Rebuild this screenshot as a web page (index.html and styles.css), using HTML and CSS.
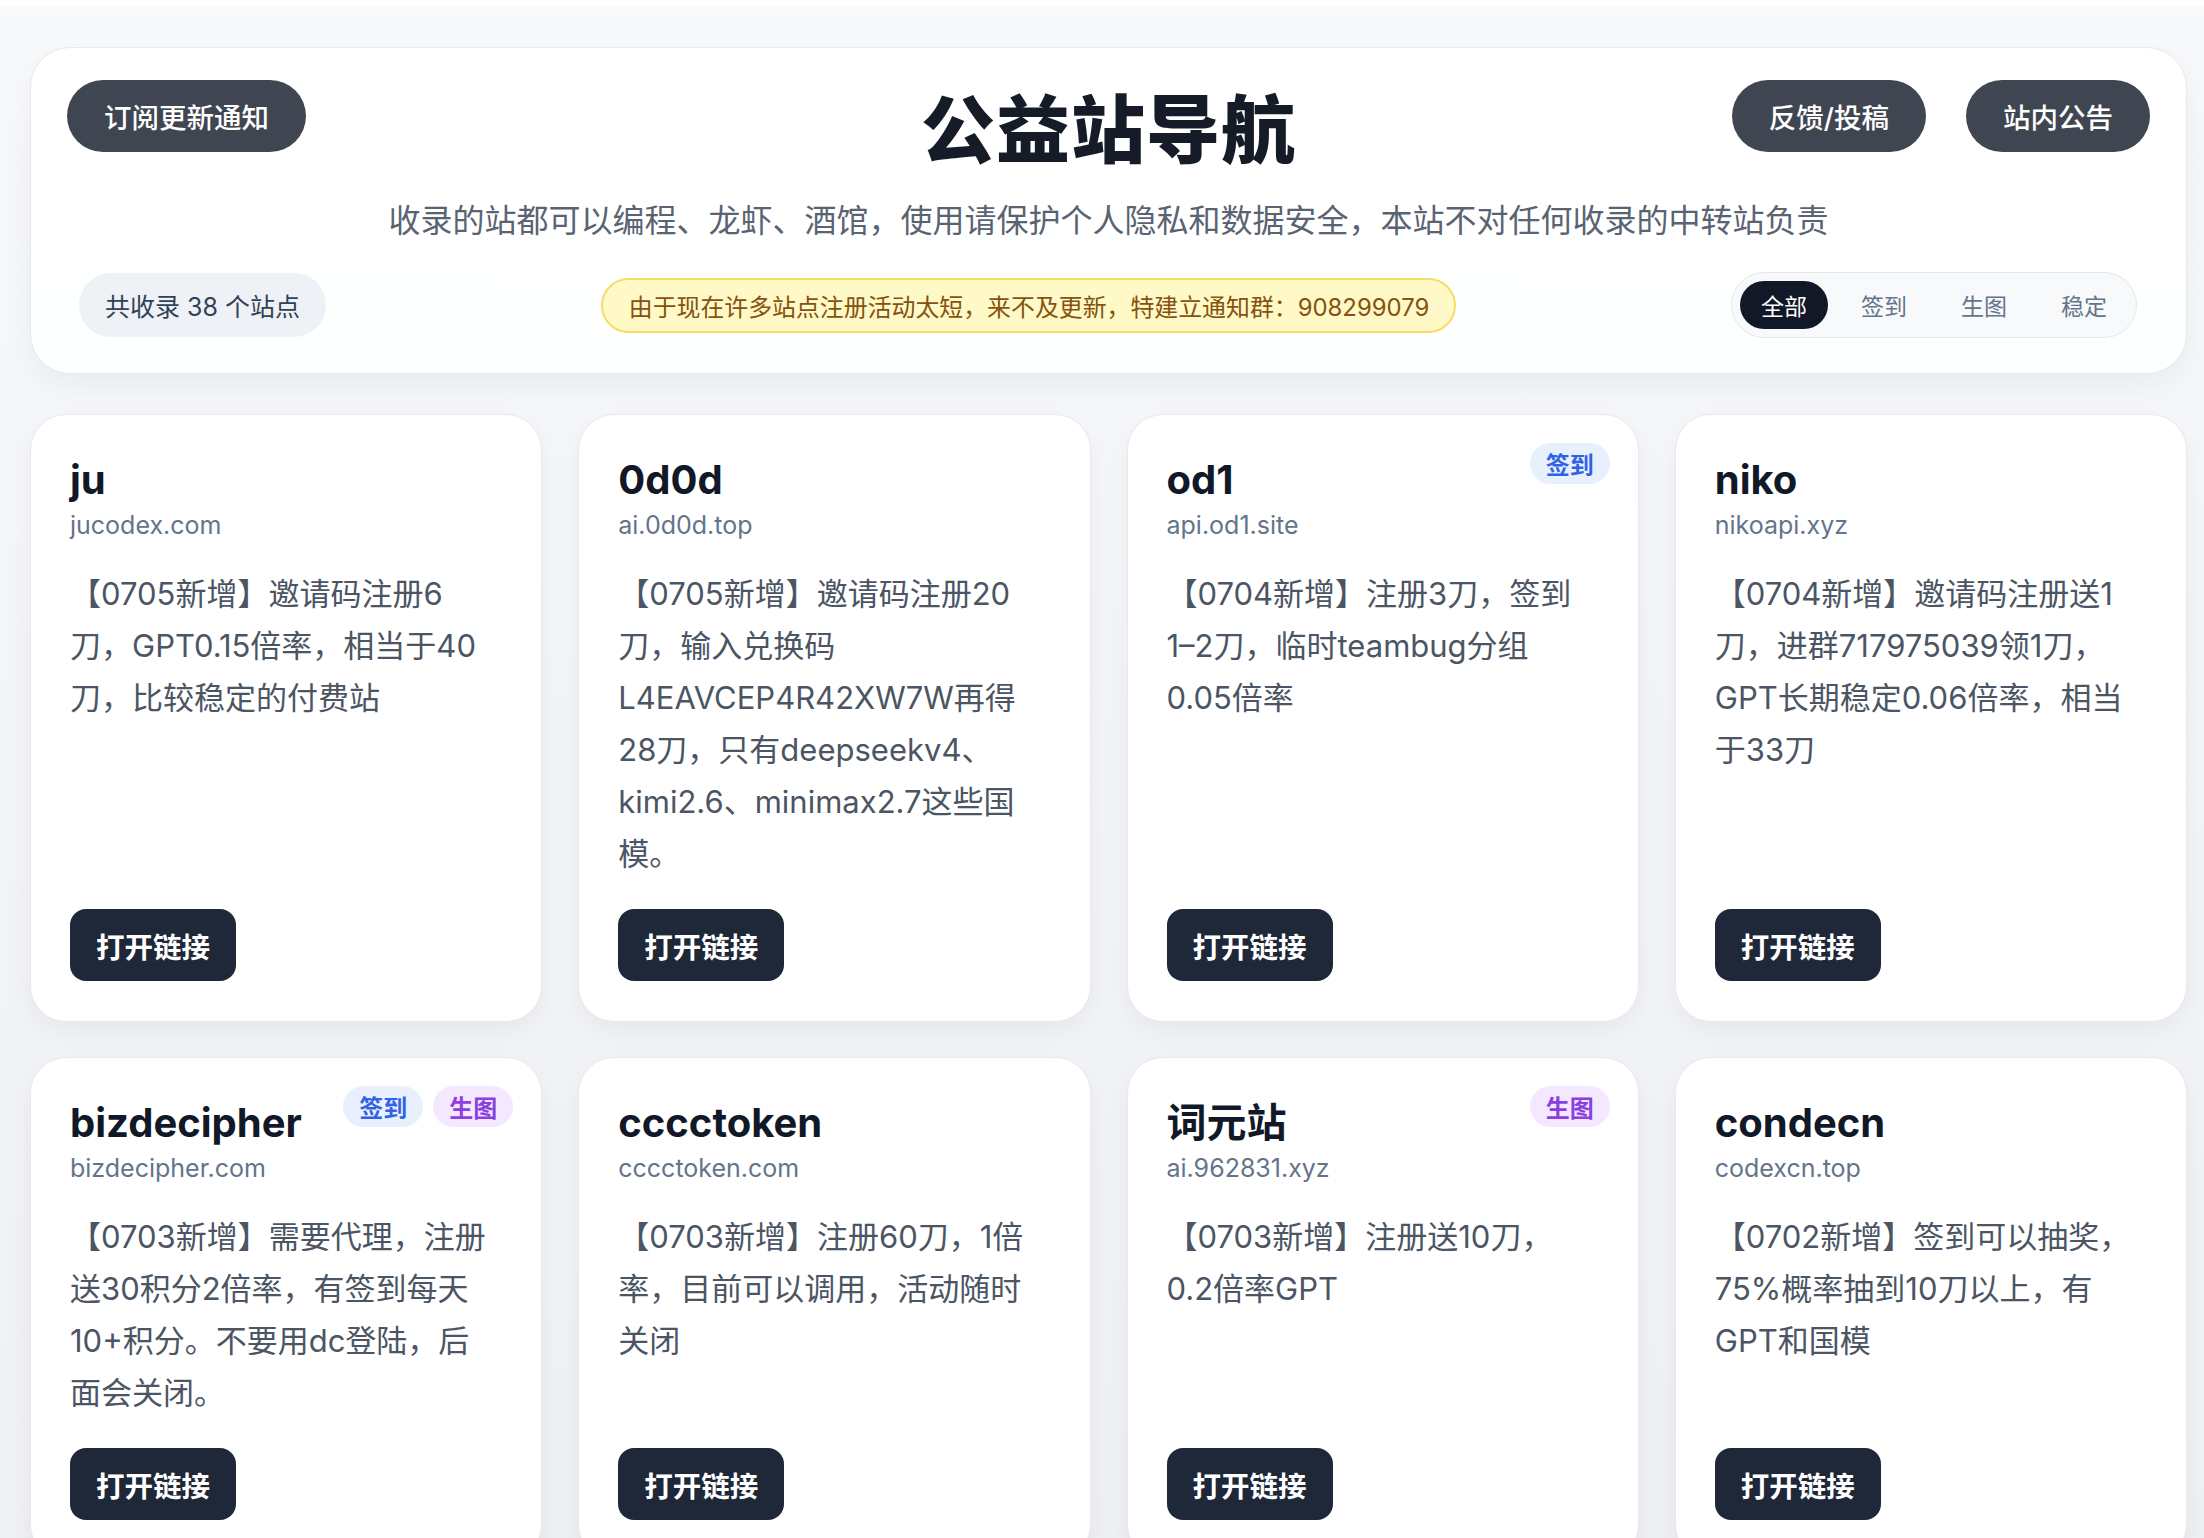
FILE: index.html
```html
<!DOCTYPE html>
<html lang="zh-CN">
<head>
    <meta charset="UTF-8">
    <meta name="viewport" content="width=device-width, initial-scale=1.0">
    <title>公益站导航</title>
    <link rel="stylesheet" href="styles.css">
</head>
<body>
    <div class="topbar"></div>
    <main class="page">
        <header class="hero">
            <div class="hero-top">
                <div class="hero-left">
                    <button class="pill-btn">订阅更新通知</button>
                </div>
                <h1 class="hero-title">公益站导航</h1>
                <div class="hero-right">
                    <button class="pill-btn">反馈/投稿</button>
                    <button class="pill-btn">站内公告</button>
                </div>
            </div>
            <p class="hero-sub">收录的站都可以编程、龙虾、酒馆，使用请保护个人隐私和数据安全，本站不对任何收录的中转站负责</p>
            <div class="hero-bar">
                <span class="count">共收录 38 个站点</span>
                <span class="notice">由于现在许多站点注册活动太短，来不及更新，特建立通知群：908299079</span>
                <div class="tabs">
                    <button class="tab active">全部</button>
                    <button class="tab">签到</button>
                    <button class="tab">生图</button>
                    <button class="tab">稳定</button>
                </div>
            </div>
        </header>

        <section class="grid">
            <article class="card">
                <h2 class="card-name">ju</h2>
                <div class="card-url">jucodex.com</div>
                <p class="card-desc">【0705新增】邀请码注册6刀，GPT0.15倍率，相当于40刀，比较稳定的付费站</p>
                <a class="open-btn" href="#">打开链接</a>
            </article>
            <article class="card">
                <h2 class="card-name">0d0d</h2>
                <div class="card-url">ai.0d0d.top</div>
                <p class="card-desc">【0705新增】邀请码注册20刀，输入兑换码L4EAVCEP4R42XW7W再得28刀，只有deepseekv4、kimi2.6、minimax2.7这些国模。</p>
                <a class="open-btn" href="#">打开链接</a>
            </article>
            <article class="card">
                <div class="tags"><span class="tag tag-sign">签到</span></div>
                <h2 class="card-name">od1</h2>
                <div class="card-url">api.od1.site</div>
                <p class="card-desc">【0704新增】注册3刀，签到1–2刀，临时teambug分组0.05倍率</p>
                <a class="open-btn" href="#">打开链接</a>
            </article>
            <article class="card">
                <h2 class="card-name">niko</h2>
                <div class="card-url">nikoapi.xyz</div>
                <p class="card-desc">【0704新增】邀请码注册送1刀，进群717975039领1刀，GPT长期稳定0.06倍率，相当于33刀</p>
                <a class="open-btn" href="#">打开链接</a>
            </article>
            <article class="card">
                <div class="tags"><span class="tag tag-sign">签到</span><span class="tag tag-img">生图</span></div>
                <h2 class="card-name">bizdecipher</h2>
                <div class="card-url">bizdecipher.com</div>
                <p class="card-desc">【0703新增】需要代理，注册送30积分2倍率，有签到每天10+积分。不要用dc登陆，后面会关闭。</p>
                <a class="open-btn" href="#">打开链接</a>
            </article>
            <article class="card">
                <h2 class="card-name">cccctoken</h2>
                <div class="card-url">cccctoken.com</div>
                <p class="card-desc">【0703新增】注册60刀，1倍率，目前可以调用，活动随时关闭</p>
                <a class="open-btn" href="#">打开链接</a>
            </article>
            <article class="card">
                <div class="tags"><span class="tag tag-img">生图</span></div>
                <h2 class="card-name">词元站</h2>
                <div class="card-url">ai.962831.xyz</div>
                <p class="card-desc">【0703新增】注册送10刀，0.2倍率GPT</p>
                <a class="open-btn" href="#">打开链接</a>
            </article>
            <article class="card">
                <h2 class="card-name">condecn</h2>
                <div class="card-url">codexcn.top</div>
                <p class="card-desc">【0702新增】签到可以抽奖，75%概率抽到10刀以上，有GPT和国模</p>
                <a class="open-btn" href="#">打开链接</a>
            </article>
        </section>
    </main>
</body>
</html>
```

FILE: styles.css
```css
* {
    box-sizing: border-box;
}
body {
    margin: 0;
    font-family: Inter, "Noto Sans CJK SC", sans-serif;
    background: linear-gradient(180deg, #f8f9fb 0%, #eef0f4 100%);
    min-height: 100vh;
    color: #111827;
}
.topbar {
    height: 6px;
    background: #fff;
}
.page {
    padding: 41px 17px 40px 30px;
}

/* header */
.hero {
    background: rgba(255, 255, 255, 0.9);
    border: 1px solid #e6e8ee;
    border-radius: 40px;
    padding: 32px 36px 35px;
    box-shadow: 0 12px 32px rgba(15, 23, 42, 0.05);
}
.hero-top {
    display: grid;
    grid-template-columns: 1fr auto 1fr;
    align-items: start;
}
.hero-right {
    justify-self: end;
    display: flex;
    gap: 40px;
}
.pill-btn {
    height: 72px;
    padding: 0 37px;
    border: none;
    border-radius: 36px;
    background: #3f4651;
    color: #fff;
    font-family: inherit;
    font-size: 27.5px;
    font-weight: 500;
    cursor: pointer;
}
.hero-title {
    margin: 0;
    font-size: 74px;
    line-height: 100px;
    font-weight: 800;
    letter-spacing: 1px;
    color: #151b27;
}
.hero-sub {
    margin: 18px 0 0;
    text-align: center;
    font-size: 32px;
    line-height: 46px;
    color: #5a6372;
}
.hero-bar {
    margin-top: 28px;
    padding: 0 13px 0 12px;
    display: flex;
    align-items: center;
    justify-content: space-between;
}
.count {
    height: 64px;
    display: flex;
    align-items: center;
    padding: 0 26px;
    border-radius: 32px;
    background: #eef2f7;
    color: #334155;
    font-size: 25px;
}
.notice {
    height: 55px;
    display: flex;
    align-items: center;
    padding: 0 25px 0 26px;
    border: 2px solid #f7dc66;
    border-radius: 28px;
    background: #fef9c6;
    color: #85520f;
    font-size: 23.9px;
}
.tabs {
    display: flex;
    gap: 12px;
    padding: 8px;
    border: 1.5px solid #e3e6ee;
    border-radius: 34px;
    background: #f8f9fb;
}
.tab {
    height: 48px;
    padding: 0 21px;
    border: none;
    border-radius: 24px;
    background: transparent;
    color: #64748b;
    font-family: inherit;
    font-size: 23px;
    cursor: pointer;
}
.tab.active {
    background: #111827;
    color: #fff;
}

/* cards */
.grid {
    margin-top: 40px;
    display: grid;
    grid-template-columns: repeat(4, 1fr);
    gap: 35px 36px;
}
.card {
    position: relative;
    display: flex;
    flex-direction: column;
    padding: 40px 52px 40px 39px;
    background: #fff;
    border: 1px solid #e7e9ef;
    border-radius: 36px;
    box-shadow: 0 10px 28px rgba(15, 23, 42, 0.05);
}
.tags {
    position: absolute;
    top: 28px;
    right: 28px;
    display: flex;
    gap: 10px;
}
.tag {
    height: 41px;
    display: flex;
    align-items: center;
    padding: 0 16px;
    border-radius: 21px;
    font-size: 24px;
    font-weight: 700;
}
.tag-sign {
    background: #e8effd;
    color: #2f62e6;
}
.tag-img {
    background: #f3e8ff;
    color: #8b3fe0;
}
.card-name {
    margin: 0;
    font-size: 40px;
    line-height: 50px;
    font-weight: 700;
    color: #111827;
}
.card-url {
    margin-top: 2px;
    font-size: 25px;
    line-height: 36px;
    color: #64748b;
}
.card-desc {
    margin: 25px 0 29px;
    font-size: 31px;
    line-height: 52px;
    color: #4b5563;
}
.open-btn {
    margin-top: auto;
    align-self: flex-start;
    height: 72px;
    display: flex;
    align-items: center;
    padding: 0 26px;
    border-radius: 16px;
    background: #1f2838;
    color: #fff;
    font-size: 28.5px;
    font-weight: 700;
    text-decoration: none;
}
```
